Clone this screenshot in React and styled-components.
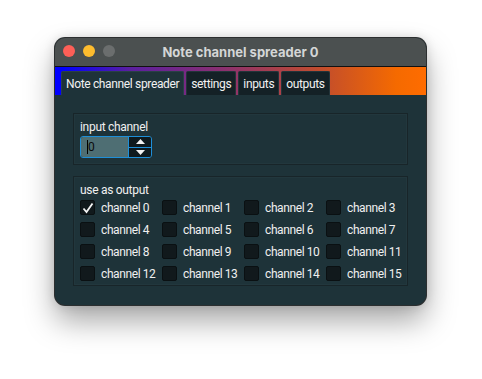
import React from "react";
import styled, { createGlobalStyle } from "styled-components";

const Global = createGlobalStyle`
  html, body { margin: 0; padding: 0; background: #ffffff; }
  body { font-family: Roboto, "Noto Sans", "Liberation Sans", sans-serif; }
`;

export default function App() {
  const channels = Array.from({ length: 16 }, (_, i) => i);
  return (
    <Page>
      <Global />
      <Window>
        <TitleBar>
          <Lights>
            <Light color="#fe5f57" />
            <Light color="#febc2e" />
            <Light color="#6b6e6e" />
          </Lights>
          <Title>Note channel spreader 0</Title>
        </TitleBar>
        <TabBar>
          <Tab active>Note channel spreader</Tab>
          <Tab>settings</Tab>
          <Tab>inputs</Tab>
          <Tab>outputs</Tab>
        </TabBar>
        <Content>
          <Group>
            <Caption>input channel</Caption>
            <Spin>
              <SpinField>0</SpinField>
              <SpinButtons>
                <SpinButton>
                  <svg width="9" height="5" viewBox="0 0 9 5"><path d="M0 5 L4.5 0 L9 5 Z" fill="#f2f2f2" /></svg>
                </SpinButton>
                <SpinButton>
                  <svg width="9" height="5" viewBox="0 0 9 5"><path d="M0 0 L4.5 5 L9 0 Z" fill="#f2f2f2" /></svg>
                </SpinButton>
              </SpinButtons>
            </Spin>
          </Group>
          <Group tight>
            <Caption>use as output</Caption>
            <Grid>
              {channels.map((c) => (
                <Check key={c}>
                  <Box>
                    {c === 0 && (
                      <svg width="12" height="12" viewBox="0 0 12 12">
                        <path d="M1.5 6.5 L4.5 10 L10.5 1.5" stroke="#f4f4f4" strokeWidth="1.8" fill="none" />
                      </svg>
                    )}
                  </Box>
                  <span>channel {c}</span>
                </Check>
              ))}
            </Grid>
          </Group>
        </Content>
      </Window>
    </Page>
  );
}

const Page = styled.div`
  padding: 38px 0 0 55px;
  height: 341px;
`;

const Window = styled.div`
  width: 371px;
  height: 267px;
  border-radius: 10px;
  overflow: hidden;
  background: #1e3339;
  box-shadow: 0 0 0 1px #2c2f30, 0 16px 30px rgba(0, 0, 0, 0.35), 0 0 12px rgba(0, 0, 0, 0.15);
  display: flex;
  flex-direction: column;
`;

const TitleBar = styled.div`
  height: 28px;
  background: #4b5050;
  position: relative;
  display: flex;
  align-items: center;
  justify-content: center;
  border-bottom: 1px solid #111;
`;

const Lights = styled.div`
  position: absolute;
  left: 8px;
  top: 7px;
  display: flex;
  gap: 8px;
`;

const Light = styled.div`
  width: 12px;
  height: 12px;
  border-radius: 50%;
  background: ${(p) => p.color};
`;

const Title = styled.div`
  color: #d4d6d6;
  font-weight: 700;
  font-size: 13px;
  font-family: Inter, "Noto Sans", sans-serif;
`;

const TabBar = styled.div`
  height: 28px;
  background: linear-gradient(90deg, #0000ff 0%, #0000ff 2%, #5a1fa0 20%, #8a3070 45%, #c24d2c 72%, #f56a00 92%, #ff6c00 100%);
  display: flex;
  align-items: flex-end;
  padding-left: 6px;
  gap: 2px;
`;

const Tab = styled.div`
  height: 24px;
  box-sizing: border-box;
  padding: 0 4px;
  display: flex;
  align-items: center;
  font-size: 12px;
  letter-spacing: -0.35px;
  color: #f2f2f2;
  background: ${(p) => (p.active ? "#1e3339" : "#142126")};
  border: 1px solid ${(p) => (p.active ? "#2a4047" : "#23343a")};
  border-bottom: none;
  border-radius: 2px 2px 0 0;
`;

const Content = styled.div`
  flex: 1;
  padding: 18px 18px 0 18px;
  display: flex;
  flex-direction: column;
  gap: 11px;
`;

const Group = styled.div`
  border: 1px solid #182529;
  box-shadow: inset 0 0 0 1px #22373d;
  padding: ${(p) => (p.tight ? "6px 6px 4px 6px" : "6px 6px 6px 6px")};
  display: flex;
  flex-direction: column;
  gap: 2px;
`;

const Caption = styled.div`
  font-size: 12px;
  letter-spacing: -0.3px;
  color: #f0f0f0;
  line-height: 14px;
`;

const Spin = styled.div`
  width: 72px;
  height: 22px;
  box-sizing: border-box;
  border: 1px solid #1e8fd8;
  border-radius: 3px;
  display: flex;
  overflow: hidden;
`;

const SpinField = styled.div`
  flex: 1;
  background: #4e6e73;
  color: #0a0a0a;
  font-size: 12px;
  display: flex;
  align-items: center;
  padding-left: 6px;
  &::before {
    content: "";
    width: 1px;
    height: 14px;
    background: #000;
  }
`;

const SpinButtons = styled.div`
  width: 22px;
  display: flex;
  flex-direction: column;
  border-left: 1px solid #1e8fd8;
`;

const SpinButton = styled.div`
  flex: 1;
  background: #0f1a1e;
  display: flex;
  align-items: center;
  justify-content: center;
  & + & {
    border-top: 1px solid #1e8fd8;
  }
`;

const Grid = styled.div`
  display: grid;
  grid-template-columns: repeat(4, 82px);
  row-gap: 7px;
  padding-top: 1px;
`;

const Check = styled.div`
  display: flex;
  align-items: center;
  gap: 6px;
  font-size: 12px;
  letter-spacing: -0.4px;
  color: #f0f0f0;
  height: 15px;
`;

const Box = styled.div`
  width: 15px;
  height: 15px;
  flex-shrink: 0;
  box-sizing: border-box;
  background: #11191c;
  border: 1px solid #0a1012;
  border-radius: 2px;
  display: flex;
  align-items: center;
  justify-content: center;
`;
